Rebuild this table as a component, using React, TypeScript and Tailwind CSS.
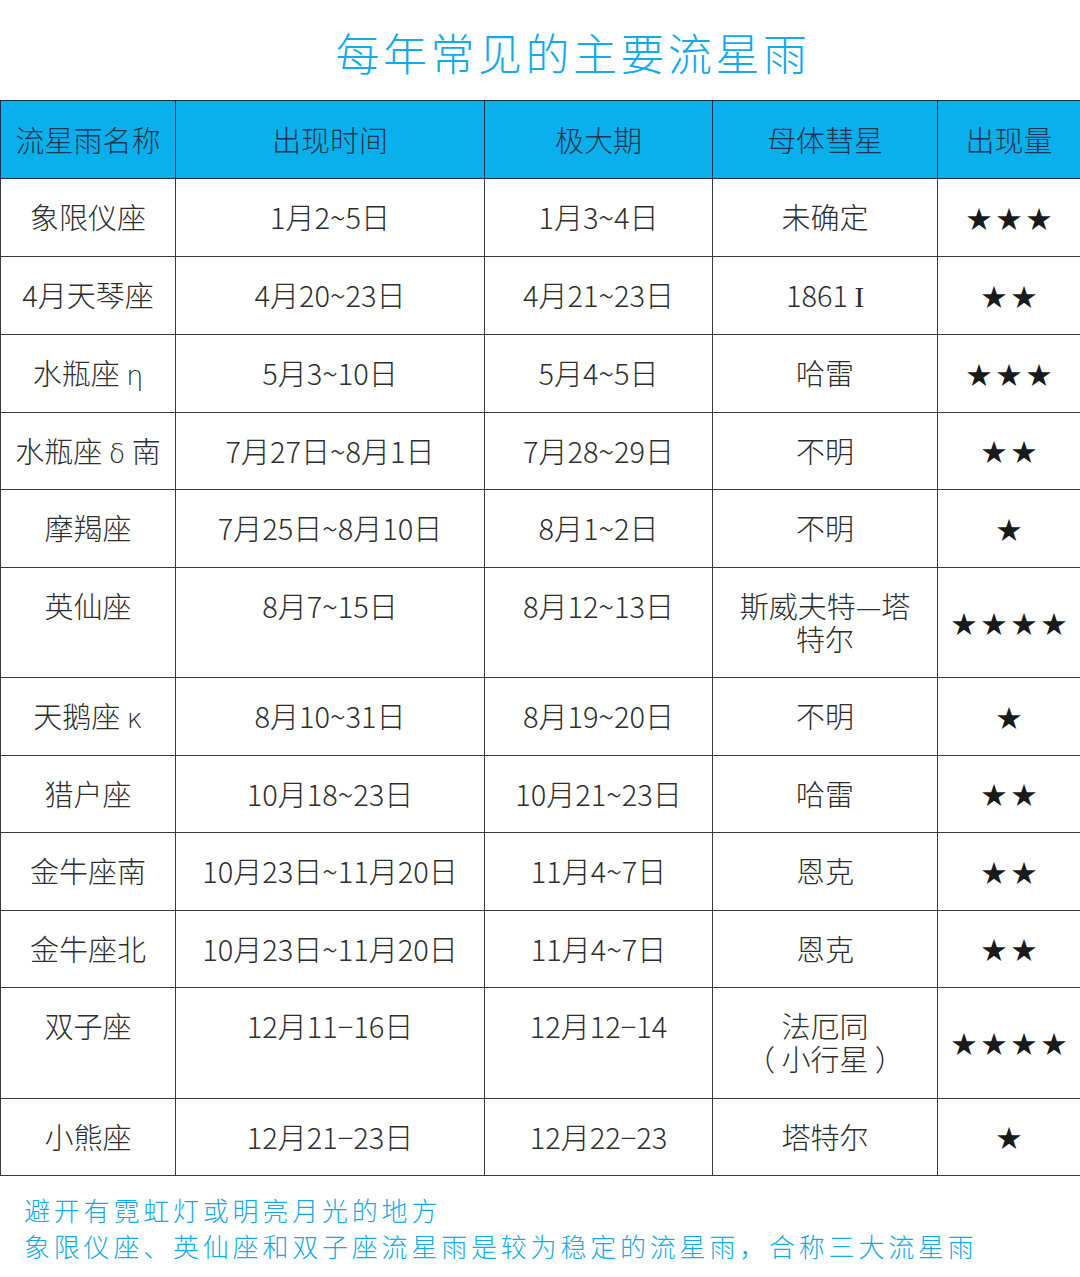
import React from "react";

type Row = {
  name: React.ReactNode;
  time: string;
  peak: string;
  comet: React.ReactNode;
  stars: number;
};

const greek = (c: string) => (
  <span className="font-['DejaVu_Sans',sans-serif] text-[27px] leading-none">{c}</span>
);

const rows: Row[] = [
  { name: "象限仪座", time: "1月2~5日", peak: "1月3~4日", comet: "未确定", stars: 3 },
  {
    name: "4月天琴座",
    time: "4月20~23日",
    peak: "4月21~23日",
    comet: (
      <>
        1861 <span className="font-['Liberation_Serif',serif] leading-none">I</span>
      </>
    ),
    stars: 2,
  },
  { name: <>水瓶座 {greek("η")}</>, time: "5月3~10日", peak: "5月4~5日", comet: "哈雷", stars: 3 },
  { name: <>水瓶座 {greek("δ")} 南</>, time: "7月27日~8月1日", peak: "7月28~29日", comet: "不明", stars: 2 },
  { name: "摩羯座", time: "7月25日~8月10日", peak: "8月1~2日", comet: "不明", stars: 1 },
  {
    name: "英仙座",
    time: "8月7~15日",
    peak: "8月12~13日",
    comet: (
      <>
        斯威夫特—塔
        <br />
        特尔
      </>
    ),
    stars: 4,
  },
  { name: <>天鹅座 {greek("κ")}</>, time: "8月10~31日", peak: "8月19~20日", comet: "不明", stars: 1 },
  { name: "猎户座", time: "10月18~23日", peak: "10月21~23日", comet: "哈雷", stars: 2 },
  { name: "金牛座南", time: "10月23日~11月20日", peak: "11月4~7日", comet: "恩克", stars: 2 },
  { name: "金牛座北", time: "10月23日~11月20日", peak: "11月4~7日", comet: "恩克", stars: 2 },
  {
    name: "双子座",
    time: "12月11−16日",
    peak: "12月12−14",
    comet: (
      <>
        法厄同
        <br />（ 小行星 ）
      </>
    ),
    stars: 4,
  },
  { name: "小熊座", time: "12月21−23日", peak: "12月22−23", comet: "塔特尔", stars: 1 },
];

const cell =
  "border border-[#3a3a3a] align-top pt-[21px] pb-[22.5px] px-0 text-center leading-[33px]";

export default function App() {
  return (
    <div className="w-[1080px] h-[1277px] bg-white font-['Noto_Sans_CJK_SC',sans-serif] overflow-hidden">
      <div className="h-[100px] flex items-center justify-center pl-[66px] pt-[4px]">
        <h1 className="text-[44px] font-light tracking-[3.5px] text-[#12aae8] leading-none">
          每年常见的主要流星雨
        </h1>
      </div>
      <table className="w-[1080px] border-collapse table-fixed text-[29px] font-light text-[#2e2e2e]">
        <colgroup>
          <col className="w-[175px]" />
          <col className="w-[309px]" />
          <col className="w-[228px]" />
          <col className="w-[225px]" />
          <col className="w-[143px]" />
        </colgroup>
        <thead>
          <tr className="bg-[#0ab0ec] text-[#1d3550]">
            {["流星雨名称", "出现时间", "极大期", "母体彗星", "出现量"].map((h) => (
              <th
                key={h}
                className="border border-[#1b2f4a] font-light h-[78px] text-center align-middle leading-[33px] px-0"
              >
                {h}
              </th>
            ))}
          </tr>
        </thead>
        <tbody>
          {rows.map((r, i) => (
            <tr key={i}>
              <td className={cell}>{r.name}</td>
              <td className={cell}>{r.time}</td>
              <td className={cell}>{r.peak}</td>
              <td className={cell}>{r.comet}</td>
              <td className="border border-[#3a3a3a] text-center align-middle text-[25px] font-normal leading-none text-[#1a1a1a] tracking-[5px] pl-[5px]">
                {"★".repeat(r.stars)}
              </td>
            </tr>
          ))}
        </tbody>
      </table>
      <div className="pl-[24px] pt-[16px] text-[26px] leading-[36px] tracking-[3.8px] text-[#12aae8] font-light">
        <p>避开有霓虹灯或明亮月光的地方</p>
        <p>象限仪座、英仙座和双子座流星雨是较为稳定的流星雨，合称三大流星雨</p>
      </div>
    </div>
  );
}
